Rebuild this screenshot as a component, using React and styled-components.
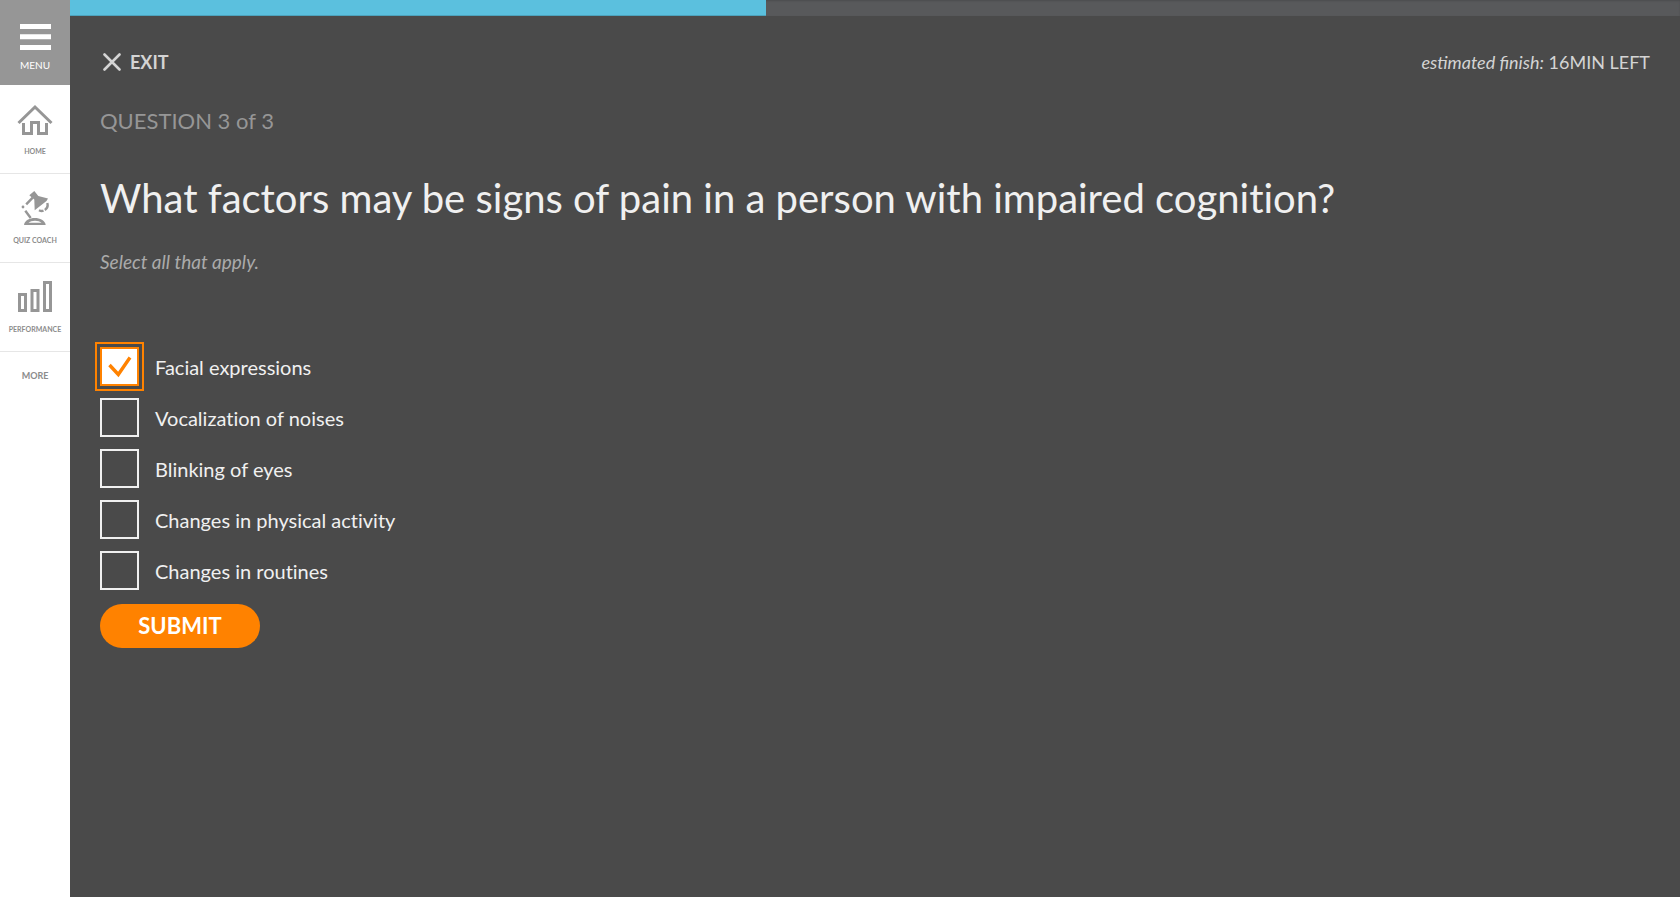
import React from "react";
import styled, { createGlobalStyle } from "styled-components";

const GlobalStyle = createGlobalStyle`
  *, *::before, *::after { box-sizing: border-box; }
  body {
    margin: 0;
    background: #4a4a4a;
    font-family: Lato, "Open Sans", sans-serif;
    font-variant-ligatures: none;
  }
`;

const Page = styled.div`
  display: flex;
  min-height: 100vh;
  background: #4a4a4a;
`;

const Sidebar = styled.nav`
  display: flex;
  flex-direction: column;
  flex: 0 0 70px;
  background: #fff;
`;

const MenuButton = styled.button`
  display: flex;
  flex-direction: column;
  align-items: center;
  gap: 9px;
  height: 85px;
  padding: 24px 0 0;
  border: 0;
  background: #969696;
  color: #fff;
  font: 400 10px/12px Lato, sans-serif;
  cursor: pointer;
`;

const NavLink = styled.a`
  display: flex;
  flex-direction: column;
  align-items: center;
  gap: 8px;
  padding: 17px 0;
  border-bottom: 1px solid #e6e6e6;
  color: #8c8c8c;
  font-size: 7px;
  font-weight: 700;
  line-height: 10px;
  text-decoration: none;
`;

const MoreButton = styled.button`
  height: 48px;
  padding: 0;
  border: 0;
  background: none;
  color: #8c8c8c;
  font: 700 9px/12px Lato, sans-serif;
  cursor: pointer;
`;

const Main = styled.main`
  flex: 1;
  min-width: 0;
`;

const ProgressTrack = styled.div`
  height: 16px;
  background: #58595b;
  box-shadow: inset 0 1px 2px rgba(0, 0, 0, 0.15);
`;

const ProgressFill = styled.div`
  height: 100%;
  background: #5bc0de;
  box-shadow: inset 0 -1px 0 rgba(0, 0, 0, 0.15);
`;

const Content = styled.div`
  padding: 32px 30px;
`;

const TopBar = styled.header`
  display: flex;
  align-items: center;
  justify-content: space-between;
  height: 28px;
  color: #d4d4d4;
`;

const ExitButton = styled.button`
  display: flex;
  align-items: center;
  gap: 9px;
  padding: 0 0 0 3px;
  border: 0;
  background: none;
  color: inherit;
  font: 700 18px/24px Lato, sans-serif;
  cursor: pointer;
`;

const Estimate = styled.p`
  margin: 0;
  font-size: 18px;
  line-height: 24px;
  em { font-variant-ligatures: normal; }
`;

const Counter = styled.p`
  margin: 30px 0 0;
  color: #969696;
  font-size: 22px;
  line-height: 30px;
`;

const Question = styled.h1`
  margin: 38px 0 0;
  color: #f0f0f0;
  font-size: 40px;
  font-weight: 400;
  line-height: 48px;
`;

const Hint = styled.p`
  margin: 26px 0 0;
  color: #ababab;
  font-size: 19px;
  font-style: italic;
  line-height: 28px;
`;

const Answers = styled.fieldset`
  display: flex;
  flex-direction: column;
  align-items: flex-start;
  gap: 12px;
  margin: 71px 0 14px;
  padding: 0;
  border: 0;
`;

const Answer = styled.label`
  display: flex;
  align-items: center;
  gap: 16px;
  color: #f0f0f0;
  font-size: 20px;
  line-height: 28px;
  cursor: pointer;
`;

const Tick = styled.span`
  display: grid;
  place-items: center;
  & > * { grid-area: 1 / 1; }
  & > svg { pointer-events: none; visibility: hidden; }
  & > input:checked + svg { visibility: visible; }
`;

const Checkbox = styled.input`
  appearance: none;
  width: 39px;
  height: 39px;
  margin: 0;
  border: 2px solid #f0f0f0;
  border-radius: 0;
  cursor: pointer;
  &:checked {
    border-color: #ff8200;
    background: #fff;
  }
  &:focus {
    outline: 2px solid #ff8200;
    outline-offset: 3px;
  }
`;

const SubmitButton = styled.button`
  height: 44px;
  min-width: 160px;
  padding: 0 24px;
  border: 0;
  border-radius: 22px;
  background: #ff8200;
  color: #fff;
  font: 700 22px/28px Lato, sans-serif;
  cursor: pointer;
`;

const MenuIcon = () => (
  <svg width="31" height="26" viewBox="0 0 31 26" fill="currentColor" aria-hidden="true">
    <path d="M0 0h31v5H0zM0 10.300h31v5H0zM0 21h31v5H0z" />
  </svg>
);

const HomeIcon = () => (
  <svg width="36" height="36" viewBox="0 0 36 36" fill="none" stroke="#969696" strokeWidth="3" aria-hidden="true">
    <path d="M1.500 21 18 5 34.500 21" />
    <path d="M6.500 21V31.500H14.500V20.500H21.500V31.500H29.500V21" />
  </svg>
);

const LampIcon = () => (
  <svg width="28" height="36" viewBox="0 0 28 36" fill="none" stroke="#969696" strokeWidth="2.400" aria-hidden="true">
    <path d="M8.300 4.300 13.300 0 17.300 5 27 7.500 25.500 10 13.700 19.300 13.300 8.500Z" fill="#969696" stroke="none" />
    <path d="M11.700 6.600 5.200 13.400M4.300 19.700 9.700 27" />
    <circle cx="2" cy="16" r="1.400" fill="#969696" stroke="none" />
    <path d="M26.300 12C27.300 15.500 25.500 18 23.800 19M22.500 19.600C21 20.200 19.600 20 18 19.200" />
    <path d="M3 34C4 24.800 23.500 24.800 24.700 34Z" fill="#969696" stroke="none" />
    <path d="M7.500 31.800C10 29 18 29 20.500 31.800Z" fill="#fff" stroke="none" />
  </svg>
);

const ChartIcon = () => (
  <svg width="34" height="36" viewBox="0 0 34 36" fill="none" stroke="#969696" strokeWidth="3" aria-hidden="true">
    <path d="M1.500 14.500H7.500V30.500H1.500ZM14 10.500H20V30.500H14ZM26.500 2.500H32.500V30.500H26.500Z" />
  </svg>
);

const CloseIcon = () => (
  <svg width="18" height="18" viewBox="0 0 18 18" fill="none" stroke="currentColor" strokeWidth="2.600" strokeLinecap="round" aria-hidden="true">
    <path d="M1.500 1.500 16.500 16.500M16.500 1.500 1.500 16.500" />
  </svg>
);

const CheckIcon = () => (
  <svg width="24" height="22" viewBox="0 0 24 22" fill="none" stroke="#ff8200" strokeWidth="3.400" aria-hidden="true">
    <path d="M1.500 9 10.300 18.500 22 1.500" />
  </svg>
);

const links = [
  { label: "HOME", Icon: HomeIcon },
  { label: "QUIZ COACH", Icon: LampIcon },
  { label: "PERFORMANCE", Icon: ChartIcon },
];

const answers = [
  "Facial expressions",
  "Vocalization of noises",
  "Blinking of eyes",
  "Changes in physical activity",
  "Changes in routines",
];

const progress = 43.2;

export default function App() {
  return (
    <>
      <GlobalStyle />
      <Page>
        <Sidebar>
          <MenuButton type="button">
            <MenuIcon />
            MENU
          </MenuButton>
          {links.map(({ label, Icon }) => (
            <NavLink key={label} href="#">
              <Icon />
              {label}
            </NavLink>
          ))}
          <MoreButton type="button">MORE</MoreButton>
        </Sidebar>
        <Main>
          <ProgressTrack role="progressbar" aria-label="Quiz progress" aria-valuenow={progress}>
            <ProgressFill style={{ width: `${progress}%` }} />
          </ProgressTrack>
          <Content>
            <TopBar>
              <ExitButton type="button">
                <CloseIcon />
                EXIT
              </ExitButton>
              <Estimate>
                <em>estimated finish:</em> 16MIN LEFT
              </Estimate>
            </TopBar>
            <Counter>QUESTION 3 of 3</Counter>
            <Question>What factors may be signs of pain in a person with impaired cognition?</Question>
            <Hint>Select all that apply.</Hint>
            <form onSubmit={(e) => e.preventDefault()}>
              <Answers aria-label="Answers">
                {answers.map((text, i) => (
                  <Answer key={text}>
                    <Tick>
                      <Checkbox type="checkbox" defaultChecked={i === 0} autoFocus={i === 0} />
                      <CheckIcon />
                    </Tick>
                    {text}
                  </Answer>
                ))}
              </Answers>
              <SubmitButton type="submit">SUBMIT</SubmitButton>
            </form>
          </Content>
        </Main>
      </Page>
    </>
  );
}
